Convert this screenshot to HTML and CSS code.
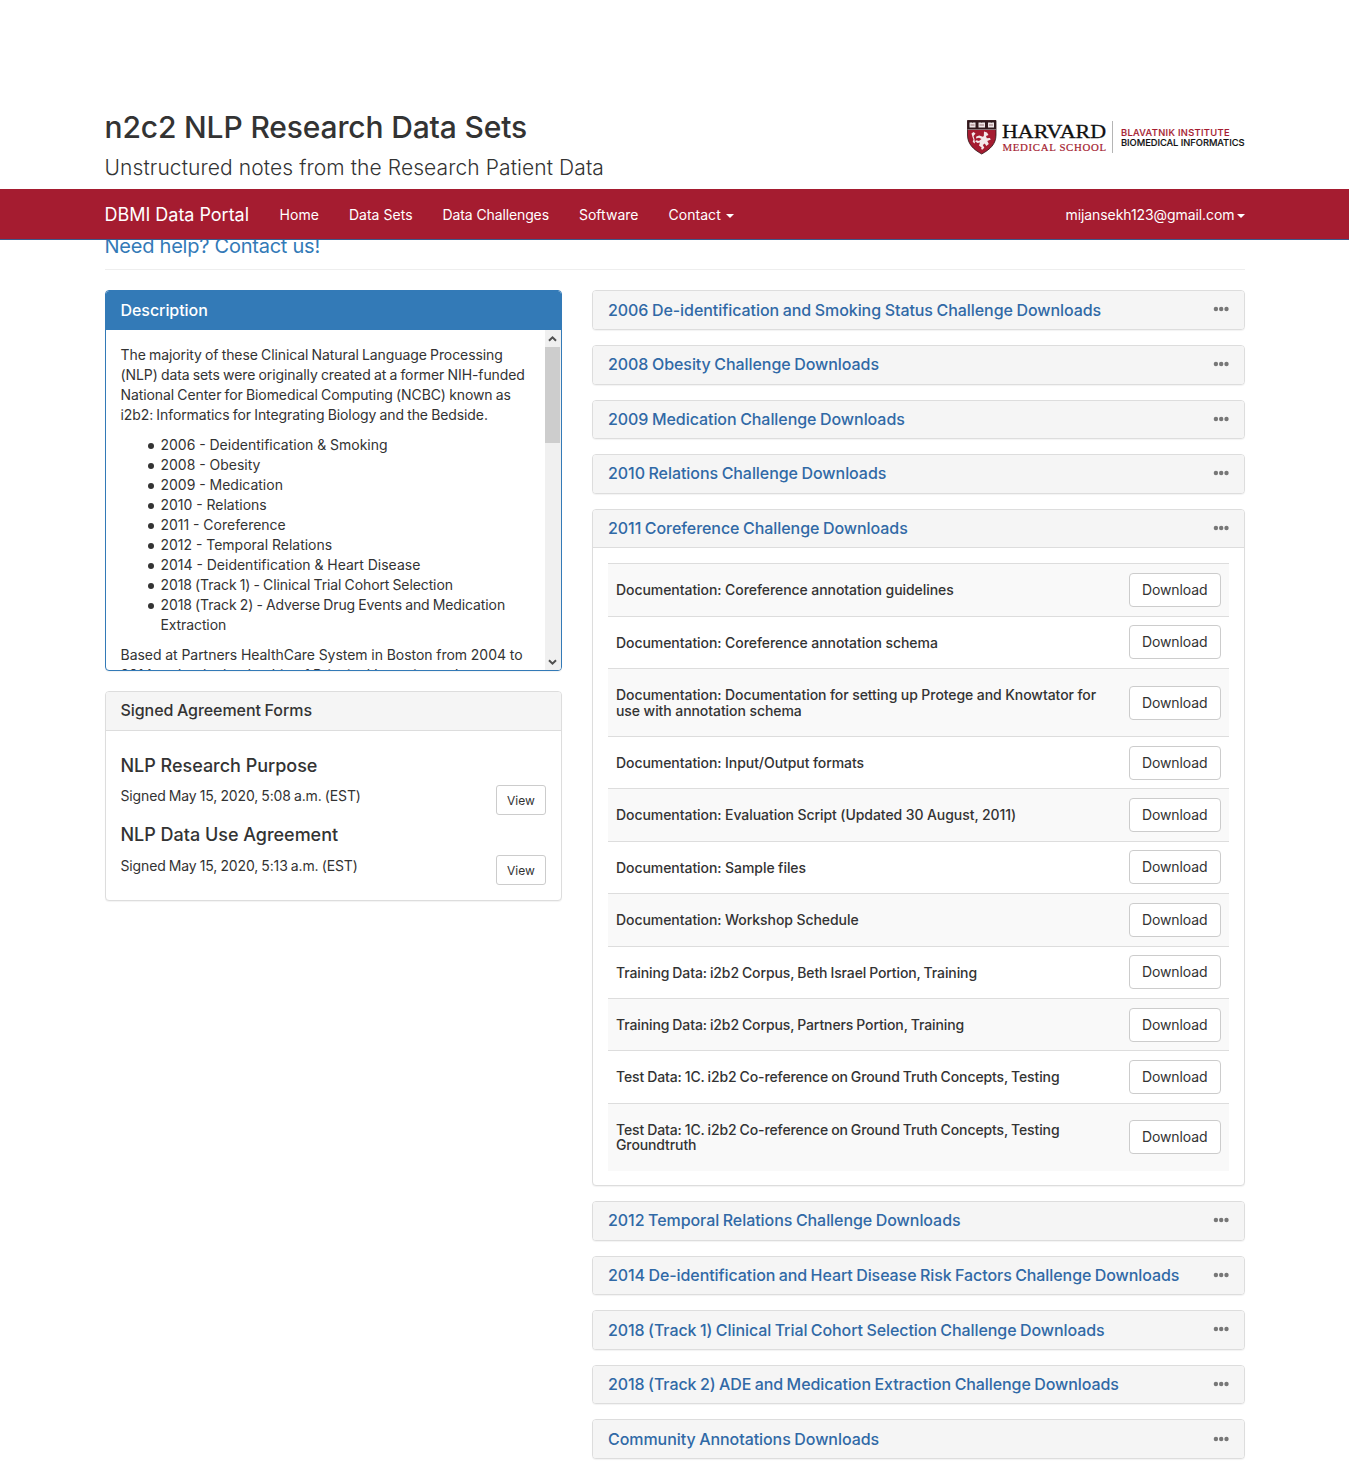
FILE: index.html
```
<!DOCTYPE html>
<html lang="en">
<head>
<meta charset="utf-8">
<title>n2c2 NLP Research Data Sets</title>
<link rel="stylesheet" href="styles.css">
</head>
<body>
<svg class="defs" width="0" height="0" aria-hidden="true">
  <symbol id="dots" viewBox="0 0 16 6"><circle cx="2.900" cy="3" r="2.2"/><circle cx="8.200" cy="3" r="2.2"/><circle cx="13.500" cy="3" r="2.2"/></symbol>
</svg>

<header class="masthead container">
  <div>
    <h2 class="site-title">n2c2 NLP Research Data Sets</h2>
    <p class="lead">Unstructured notes from the Research Patient Data</p>
  </div>
  <svg class="logo" width="280" height="38" viewBox="0 0 280 38" role="img" aria-label="Harvard Medical School, Blavatnik Institute Biomedical Informatics">
    <path d="M2.500 2.500H31V17C31 26 25 31.500 16.700 36C8.500 31.500 2.500 26 2.500 17Z" fill="#a51c30" stroke="#2b1518" stroke-width=".8"/>
    <path d="M2.500 2.500H31V12H2.500Z" fill="#30181c"/>
    <path d="M2.500 11.500H31" stroke="#d9c9cb" stroke-width=".5"/>
    <g fill="#eee5e6"><path d="M4.500 4.500h2.700l.5.6.5-.6h2.300v5h-6zM13.500 4.500h2.800l.5.6.5-.6h2.700v5h-6.500zM23 4.500h2.700l.5.6.5-.6h2.300v5h-6z"/></g>
    <path d="M5.500 7h4M14.500 7h4.500M24 7h4" stroke="#8a6065" stroke-width=".9"/>
    <path d="M19 13.500l3 1 1.500 2.500-2.500 1 .8 2.300 3-.3 1 1.500-3.500 1.600 1.500 3-2.500 1.800-1.500-2.500-2 1.500 1.500 2.800-2 2-1.200-.8.500-1.400-2.600-2 1-3-2.500.5-2.500-1.800 1.500-1 2.500.8 2.500-2-2.500-1.200-3 .7.300-1.900 3-1.200 3.500 1.400 1-.8zM10.500 15.500l-2-1.500-2 1.500 1 3.500 1 2.500-.8 2.500 2.300 1.500-.5-4-1-3.500z" fill="#f3e9ea"/>
    <text class="logo-harvard" x="37" y="19.500" textLength="104" lengthAdjust="spacingAndGlyphs">HARVARD</text>
    <text class="logo-school" x="37.500" y="32.500" textLength="103.500">MEDICAL SCHOOL</text>
    <path d="M147.500 3V35" stroke="#b5b5b5"/>
    <text class="logo-unit logo-crimson" x="156" y="18" textLength="108.500">BLAVATNIK INSTITUTE</text>
    <text class="logo-unit" x="156" y="28" textLength="123.500">BIOMEDICAL INFORMATICS</text>
  </svg>
</header>

<nav class="navbar">
  <div class="container nav-row">
    <a class="brand" href="#">DBMI Data Portal</a>
    <a class="nav-link" href="#">Home</a>
    <a class="nav-link" href="#">Data Sets</a>
    <a class="nav-link tight" href="#">Data Challenges</a>
    <a class="nav-link" href="#">Software</a>
    <a class="nav-link" href="#">Contact <span class="caret spaced"></span></a>
    <a class="nav-link user" href="#">mijansekh123@gmail.com<span class="caret"></span></a>
  </div>
</nav>

<main class="container">
  <p class="help"><a href="#">Need help? Contact us!</a></p>
  <div class="columns">
    <div>
      <section class="panel primary">
        <h3 class="panel-heading">Description</h3>
        <div class="scroller">
          <div class="scroll-text">
            <p>The majority of these Clinical Natural Language Processing<br>(NLP) data sets were originally created at a former NIH-funded<br>National Center for Biomedical Computing (NCBC) known as<br>i2b2: Informatics for Integrating Biology and the Bedside.</p>
            <ul>
              <li>2006 - Deidentification &amp; Smoking</li>
              <li>2008 - Obesity</li>
              <li>2009 - Medication</li>
              <li>2010 - Relations</li>
              <li>2011 - Coreference</li>
              <li>2012 - Temporal Relations</li>
              <li>2014 - Deidentification &amp; Heart Disease</li>
              <li class="track">2018 (Track 1) - Clinical Trial Cohort Selection</li>
              <li class="track">2018 (Track 2) - Adverse Drug Events and Medication<br>Extraction</li>
            </ul>
            <p class="history">Based at Partners HealthCare System in Boston from 2004 to<br>2014 under the leadership of Principal Investigator Isaac</p>
          </div>
          <div class="scrollbar">
            <svg width="15" height="17" viewBox="0 0 15 17"><path d="M4 10.800L7.500 7.300L11 10.800" /></svg>
            <div class="thumb"></div>
            <svg class="down" width="15" height="17" viewBox="0 0 15 17"><path d="M4 7.200L7.500 10.700L11 7.200" /></svg>
          </div>
        </div>
      </section>
      <section class="panel">
        <h3 class="panel-heading">Signed Agreement Forms</h3>
        <div class="panel-body">
          <h4>NLP Research Purpose</h4>
          <div class="signed"><span>Signed May 15, 2020, 5:08 a.m. (EST)</span><a class="btn small" href="#">View</a></div>
          <h4>NLP Data Use Agreement</h4>
          <div class="signed"><span>Signed May 15, 2020, 5:13 a.m. (EST)</span><a class="btn small" href="#">View</a></div>
        </div>
      </section>
    </div>

    <div class="downloads">
      <section class="panel"><h3 class="panel-heading"><a href="#">2006 De-identification and Smoking Status Challenge Downloads</a><svg class="dots"><use href="#dots"/></svg></h3></section>
      <section class="panel"><h3 class="panel-heading"><a href="#">2008 Obesity Challenge Downloads</a><svg class="dots"><use href="#dots"/></svg></h3></section>
      <section class="panel"><h3 class="panel-heading"><a href="#">2009 Medication Challenge Downloads</a><svg class="dots"><use href="#dots"/></svg></h3></section>
      <section class="panel"><h3 class="panel-heading"><a href="#">2010 Relations Challenge Downloads</a><svg class="dots"><use href="#dots"/></svg></h3></section>
      <section class="panel open">
        <h3 class="panel-heading"><a href="#">2011 Coreference Challenge Downloads</a><svg class="dots"><use href="#dots"/></svg></h3>
        <div class="panel-body">
          <div class="file"><h5>Documentation: Coreference annotation guidelines</h5><a class="btn" href="#">Download</a></div>
          <div class="file"><h5>Documentation: Coreference annotation schema</h5><a class="btn" href="#">Download</a></div>
          <div class="file"><h5>Documentation: Documentation for setting up Protege and Knowtator for<br>use with annotation schema</h5><a class="btn" href="#">Download</a></div>
          <div class="file"><h5>Documentation: Input/Output formats</h5><a class="btn" href="#">Download</a></div>
          <div class="file"><h5>Documentation: Evaluation Script (Updated 30 August, 2011)</h5><a class="btn" href="#">Download</a></div>
          <div class="file"><h5>Documentation: Sample files</h5><a class="btn" href="#">Download</a></div>
          <div class="file"><h5>Documentation: Workshop Schedule</h5><a class="btn" href="#">Download</a></div>
          <div class="file data"><h5>Training Data: i2b2 Corpus, Beth Israel Portion, Training</h5><a class="btn" href="#">Download</a></div>
          <div class="file data"><h5>Training Data: i2b2 Corpus, Partners Portion, Training</h5><a class="btn" href="#">Download</a></div>
          <div class="file data"><h5>Test Data: 1C. i2b2 Co-reference on Ground Truth Concepts, Testing</h5><a class="btn" href="#">Download</a></div>
          <div class="file data"><h5>Test Data: 1C. i2b2 Co-reference on Ground Truth Concepts, Testing<br>Groundtruth</h5><a class="btn" href="#">Download</a></div>
        </div>
      </section>
      <section class="panel"><h3 class="panel-heading"><a href="#">2012 Temporal Relations Challenge Downloads</a><svg class="dots"><use href="#dots"/></svg></h3></section>
      <section class="panel long"><h3 class="panel-heading"><a href="#">2014 De-identification and Heart Disease Risk Factors Challenge Downloads</a><svg class="dots"><use href="#dots"/></svg></h3></section>
      <section class="panel long"><h3 class="panel-heading"><a href="#">2018 (Track 1) Clinical Trial Cohort Selection Challenge Downloads</a><svg class="dots"><use href="#dots"/></svg></h3></section>
      <section class="panel long"><h3 class="panel-heading"><a href="#">2018 (Track 2) ADE and Medication Extraction Challenge Downloads</a><svg class="dots"><use href="#dots"/></svg></h3></section>
      <section class="panel"><h3 class="panel-heading"><a href="#">Community Annotations Downloads</a><svg class="dots"><use href="#dots"/></svg></h3></section>
    </div>
  </div>
</main>
</body>
</html>
```
FILE: styles.css
```
* { box-sizing: border-box; }
body { margin: 0; font: 14px/20px Inter, "Liberation Sans", sans-serif; color: #333; background: #fff; height: 1480px; overflow: hidden; }
h2, h3, h4, h5, p, ul { margin: 0; font-weight: 500; }
p, ul { font-weight: 400; }
a { color: #3069a6; text-decoration: none; }
.defs { display: block; }
.container { width: 1140px; margin: 0 auto; }

.masthead { display: flex; justify-content: space-between; padding-top: 111px; height: 189px; }
.site-title { font-size: 30px; line-height: 33px; letter-spacing: -.15px; }
.lead { margin-top: 9px; font-size: 21px; line-height: 29px; font-weight: 300; letter-spacing: .09px; }
.logo { margin-top: 7px; }
.logo-harvard { font: 19.500px "Liberation Serif", serif; fill: #111; stroke: #111; stroke-width: .3; }
.logo-school { font: 10.800px "Liberation Serif", serif; fill: #a51c30; stroke: #a51c30; stroke-width: .2; }
.logo-unit { font: 500 9.300px Inter, sans-serif; fill: #111; stroke: #111; stroke-width: .15; }
.logo-crimson { fill: #a51c30; stroke: #a51c30; }

.navbar { position: relative; z-index: 1; height: 51px; background: #a51c30; border-bottom: 1px solid #3c5a8c; }
.nav-row { display: flex; height: 50px; }
.navbar a { color: #fff; line-height: 20px; padding: 16px 15px 14px; white-space: nowrap; letter-spacing: .03px; }
.navbar .brand { padding-left: 0; padding-right: 15.500px; font-size: 18px; letter-spacing: -.02px; }
.navbar .tight { letter-spacing: -.12px; }
.navbar .user { margin-left: auto; padding-right: 0; letter-spacing: -.08px; }
.caret { display: inline-block; margin-left: 2px; vertical-align: middle; border: 4px solid transparent; border-top-color: #fff; border-bottom: 0; }
.caret.spaced { margin-left: 1px; }

.help { margin-top: -9px; height: 39px; border-bottom: 1px solid #eee; font-size: 20px; line-height: 30px; letter-spacing: -.24px; }
.help a { color: #337ab7; }
.columns { display: grid; grid-template-columns: 457.500px 652.500px; gap: 30px; align-items: start; margin-top: 20.400px; }

.panel { margin-bottom: 20px; background: #fff; border: 1px solid #ddd; border-radius: 4px; box-shadow: 0 1px 1px rgba(0,0,0,.05); }
.panel-heading { display: flex; justify-content: space-between; padding: 10.300px 15px 9.700px; background: #f5f5f5; border-radius: 3px; font-size: 16px; line-height: 17.600px; letter-spacing: -.06px; word-spacing: -.6px; white-space: nowrap; }
.long .panel-heading { letter-spacing: -.08px; word-spacing: -.7px; }
.panel-heading:not(:only-child) { border-bottom: 1px solid #ddd; border-radius: 3px 3px 0 0; }
.panel-body { padding: 15px; }
.open .panel-body { padding-bottom: 14.600px; }
.primary { border-color: #337ab7; overflow: hidden; }
.primary .panel-heading { background: #337ab7; border-color: #337ab7; color: #fff; }

.scroller { display: flex; height: 340px; overflow: hidden; }
.scroll-text { flex: 1; padding: 15px 0 0 15px; white-space: nowrap; letter-spacing: -.09px; word-spacing: -.6px; }
.scroll-text ul { margin: 10px 0; padding-left: 40px; list-style: none; letter-spacing: 0; word-spacing: -.1px; }
.scroll-text li::before { content: ""; display: inline-block; width: 6px; height: 6px; margin: 0 7px 1px -13px; border-radius: 50%; background: #333; }
.scroll-text .track { letter-spacing: -.11px; word-spacing: -.6px; }
.scroll-text .history { letter-spacing: -.03px; word-spacing: -.15px; }
.scrollbar { display: flex; flex-direction: column; width: 16px; background: #f0f0f0; }
.scrollbar svg { fill: none; stroke: #505050; stroke-width: 2; }
.thumb { width: 15px; height: 96px; background: #cdcdcd; }
.down { margin-top: auto; }

h4 { margin: 10px 0; font-size: 18px; line-height: 19.800px; letter-spacing: -.02px; }
.signed { display: flex; justify-content: space-between; height: 30px; letter-spacing: -.14px; word-spacing: -.6px; }
.signed span { padding-top: .6px; }
.btn { flex: none; padding: 6px 12px; border: 1px solid #ccc; border-radius: 4px; background: #fff; color: #333; letter-spacing: -.1px; }
.btn.small { padding: 5.400px 10px 4.600px; height: 30px; border-radius: 3px; font-size: 12px; line-height: 18px; letter-spacing: .05px; }

.downloads .panel { margin-bottom: 15px; }
.dots { width: 16px; height: 6px; margin-top: 4.800px; fill: #777; }
.file { display: flex; justify-content: space-between; align-items: center; padding: 8px; min-height: 52.400px; border-top: 1px solid #ddd; }
.file:nth-child(odd) { background: #f9f9f9; }
h5 { margin: 10px 0; font-size: 14px; line-height: 15.400px; white-space: nowrap; letter-spacing: -.06px; word-spacing: -.1px; }
.data h5 { letter-spacing: -.11px; word-spacing: -.6px; }
```
